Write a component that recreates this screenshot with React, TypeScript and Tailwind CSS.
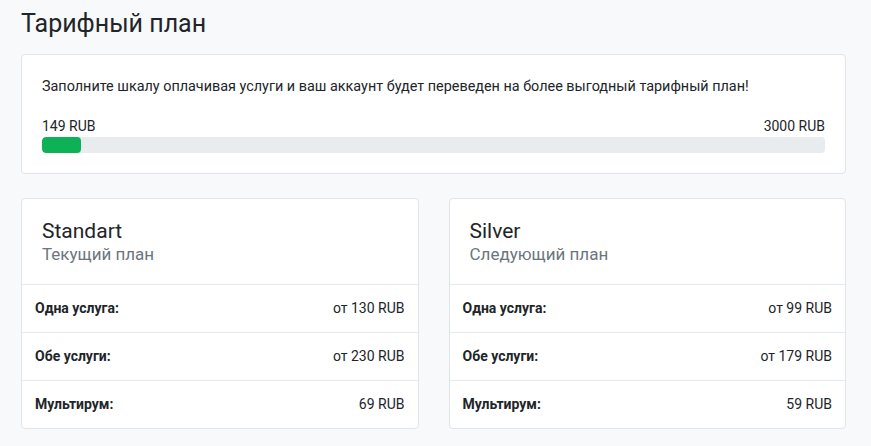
import React from "react";

const rowsA = [
  ["Одна услуга:", "от 130 RUB"],
  ["Обе услуги:", "от 230 RUB"],
  ["Мультирум:", "69 RUB"],
];
const rowsB = [
  ["Одна услуга:", "от 99 RUB"],
  ["Обе услуги:", "от 179 RUB"],
  ["Мультирум:", "59 RUB"],
];

function PlanCard({ name, sub, rows }: { name: string; sub: string; rows: string[][] }) {
  return (
    <div className="bg-white border border-[#e1e4e8] rounded-[4px]">
      <div className="px-5 pt-[20px] pb-[20px]">
        <div className="text-[21px] leading-[25px] text-[#212529]">{name}</div>
        <div className="text-[17px] leading-5 text-[#6c757d]">{sub}</div>
      </div>
      {rows.map(([l, v]) => (
        <div key={l} className="flex justify-between items-center border-t border-[#e6e9ec] px-[13px] py-[13px] text-[14px] leading-[21px] text-[#212529]">
          <span className="font-bold">{l}</span>
          <span>{v}</span>
        </div>
      ))}
    </div>
  );
}

export default function App() {
  return (
    <div className="min-h-[446px] bg-[#f8f9fa] px-[21px] pt-[8px] pb-4" style={{ fontFamily: "Roboto, 'Liberation Sans', sans-serif" }}>
      <div className="w-[825px]">
        <h1 className="text-[25px] leading-[31px] text-[#212529] mb-[15px]">Тарифный план</h1>
        <div className="bg-white border border-[#e1e4e8] rounded-[4px] p-5 text-[#212529]">
          <p className="text-[14.4px] leading-[21px] mb-[19px] pt-[1px]">
            Заполните шкалу оплачивая услуги и ваш аккаунт будет переведен на более выгодный тарифный план!
          </p>
          <div className="flex justify-between text-[14px] leading-[21px]">
            <span>149 RUB</span>
            <span>3000 RUB</span>
          </div>
          <div className="h-4 bg-[#e9ecef] rounded-[4px] overflow-hidden">
            <div className="h-full bg-[#0db257] rounded-[4px]" style={{ width: "5%" }} />
          </div>
        </div>
        <div className="grid grid-cols-2 gap-[30px] mt-6">
          <PlanCard name="Standart" sub="Текущий план" rows={rowsA} />
          <PlanCard name="Silver" sub="Следующий план" rows={rowsB} />
        </div>
      </div>
    </div>
  );
}
